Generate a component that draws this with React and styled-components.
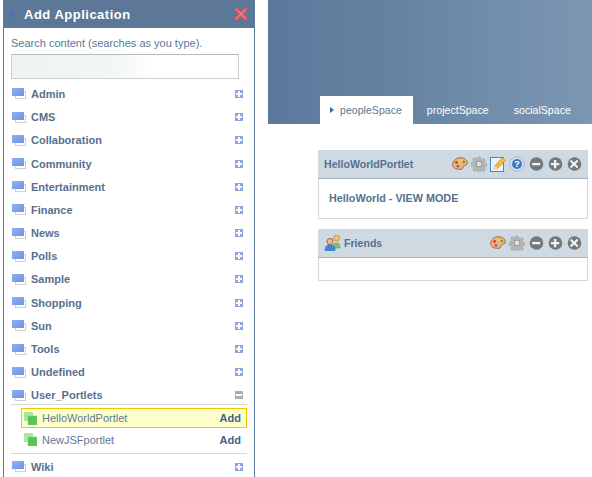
import React from 'react'
import styled, { createGlobalStyle } from 'styled-components'

const Global = createGlobalStyle`
  html, body { margin: 0; padding: 0; background: #fff; overflow: hidden; }
  body { font-family: "Liberation Sans", Arial, sans-serif; }
`
const Page = styled.div`
  width: 592px;
  height: 477px;
  display: flex;
  overflow: hidden;
`
const Drawer = styled.aside`
  width: 250px;
  height: 477px;
  margin-left: 3px;
  border: solid #5d7b9d;
  border-width: 0 1px 0 1px;
  flex: none;
`
const DrawerHead = styled.header`
  height: 28px;
  background: #5c7797;
  display: flex;
  align-items: center;
  padding: 0 6px 0 7px;
  color: #fff;
  font-size: 13px;
  font-weight: bold;
  letter-spacing: 0.5px;
`
const HeadArrow = styled.span`
  width: 0;
  height: 0;
  border-left: 5px solid #3f78b8;
  border-top: 4px solid transparent;
  border-bottom: 4px solid transparent;
  margin-right: 8px;
`
const HeadTitle = styled.span`
  flex: 1;
`
const SearchLabel = styled.div`
  margin: 9px 0 0 7px;
  font-size: 11px;
  line-height: 13px;
  color: #5c7797;
`
const SearchBox = styled.div`
  width: 226px;
  height: 23px;
  margin: 4px 0 0 7px;
  border: 1px solid #c9cfcf;
  border-top-color: #b5bcbc;
  background: linear-gradient(90deg, #eef3f3 0, #f3f6f6 45%, #fff 62%);
`
const List = styled.div`
  margin-top: 3.4px;
`
const Row = styled.div`
  height: 23.2px;
  display: flex;
  align-items: center;
  padding: 0 11px 0 8px;
  color: #56718f;
  font-size: 11px;
  font-weight: bold;
`
const RowName = styled.span`
  flex: 1;
  margin-left: 5px;
`
const SubList = styled.div`
  margin: -2.9px 7px 1px 7px;
  padding: 3px 0 2px;
  border-top: 1px solid #d8d8d8;
  border-bottom: 1px solid #d8d8d8;
`
const SubRow = styled.div`
  height: ${p => (p.$active ? '20px' : '23px')};
  display: flex;
  align-items: center;
  box-sizing: border-box;
  margin-left: 10px;
  padding: 0 5px 0 2px;
  font-size: 11px;
  color: #5f7a99;
  background: ${p => (p.$active ? '#ffffcc' : 'transparent')};
  border: ${p => (p.$active ? '1px solid #f2c600' : '1px solid transparent')};
`
const SubName = styled.span`
  flex: 1;
  margin-left: 5px;
`
const AddLink = styled.span`
  color: #3e6290;
  font-weight: bold;
`
const Main = styled.main`
  margin-left: 13px;
  flex: 1;
  min-width: 0;
`
const Hero = styled.div`
  height: 124px;
  background: linear-gradient(90deg, #5b799c 0%, #64829f 35%, #6f8cab 65%, #7c97b2 100%);
  display: flex;
  align-items: flex-end;
  padding-left: 52px;
`
const Tab = styled.div`
  height: 28px;
  display: flex;
  align-items: center;
  padding: 0 ${p => (p.$active ? '11px' : '13px')} 0 ${p => (p.$active ? '10px' : '12px')};
  background: ${p => (p.$active ? '#fff' : 'transparent')};
  color: ${p => (p.$active ? '#5c7797' : '#fff')};
  font-size: 10.6px;
  margin-right: ${p => (p.$active ? '2px' : '0')};
`
const TabArrow = styled.span`
  width: 0;
  height: 0;
  border-left: 4px solid #2f6ea5;
  border-top: 3.5px solid transparent;
  border-bottom: 3.5px solid transparent;
  margin-right: 6px;
`
const Portlets = styled.div`
  padding: 26px 4px 0 50px;
  display: flex;
  flex-direction: column;
  gap: 10px;
`
const Portlet = styled.section`
  width: 270px;
`
const PortletBar = styled.div`
  height: 27px;
  padding: 0 6px 1px;
  background: #cfd9e2;
  border-bottom: 1px solid #a9b6c2;
  display: flex;
  align-items: center;
  color: #56718f;
  font-size: 10.6px;
  font-weight: bold;
`
const PortletTitle = styled.span`
  flex: 1;
  margin-left: ${p => (p.$icon ? '1px' : '0')};
`
const PortletTools = styled.div`
  display: flex;
  align-items: center;
  gap: 3px;
`
const PortletBody = styled.div`
  height: ${p => p.$h}px;
  box-sizing: border-box;
  border: 1px solid #cfd9e2;
  border-top: 0;
  padding: 13px 10px 0;
  color: #56718f;
  font-size: 10.8px;
  font-weight: bold;
`

const Folder = () => (
  <svg width="14" height="11" viewBox="0 0 14 11">
    <defs>
      <linearGradient id="fold" x1="0" y1="0" x2="1" y2="1">
        <stop offset="0" stopColor="#8fb0f2" />
        <stop offset="1" stopColor="#6f93e0" />
      </linearGradient>
    </defs>
    <rect x="3.500" y="3.500" width="10" height="7" fill="#fff" stroke="#cfcfcf" />
    <rect x="0" y="0" width="12" height="8" fill="url(#fold)" />
  </svg>
)
const Toggle = ({ open }) => (
  <svg width="8" height="8" viewBox="0 0 8 8">
    <rect width="8" height="8" fill={open ? '#a9adb5' : '#8ea6dc'} />
    <path d={open ? 'M1 3h6v2H1z' : 'M3 1h2v2h2v2H5v2H3V5H1V3h2z'} fill="#fff" />
  </svg>
)
const PortletIcon = () => (
  <svg width="13" height="13" viewBox="0 0 13 13">
    <rect width="9" height="9" fill="#a8ea9c" />
    <rect x="4" y="4" width="9" height="9" fill="#58c458" stroke="#7bd07a" strokeWidth="0.600" />
  </svg>
)
const Close = () => (
  <svg width="14" height="14" viewBox="0 0 14 14">
    <path d="M2.500 2.500l9 9M11.500 2.500l-9 9" stroke="#f0555e" strokeWidth="3.400" strokeLinecap="round" />
    <path d="M2.500 2.500l9 9M11.500 2.500l-9 9" stroke="#f58a8e" strokeWidth="1" strokeLinecap="round" />
  </svg>
)
const Palette = () => (
  <svg width="16" height="14" viewBox="0 0 16 14">
    <path d="M.7 7.500C.7 3.500 4.500.7 8.500.7c4 0 6.800 2.400 6.800 5.300 0 2.600-2.800 2-3.800 3-.9.9.6 3.300-3.500 3.300C3.800 12.300.7 11 .7 7.500z" fill="#efb47a" stroke="#a8683a" />
    <circle cx="4.500" cy="5.500" r="1.400" fill="#d9352b" />
    <circle cx="8" cy="3.600" r="1.300" fill="#e8cf3a" />
    <circle cx="11.800" cy="5" r="1.300" fill="#4aa84a" />
    <circle cx="6" cy="9.300" r="1.300" fill="#3a6fd0" />
  </svg>
)
const Gear = () => (
  <svg width="16" height="16" viewBox="0 0 16 16">
    <path d="M6.800 1h2.400l.4 2 1.500.6 1.700-1.100 1.700 1.700-1.100 1.700.6 1.500 2 .4v2.400l-2 .4-.6 1.500 1.100 1.700-1.700 1.700-1.700-1.100-1.500.6-.4 2H6.800l-.4-2-1.500-.6-1.700 1.100-1.700-1.700 1.100-1.700-.6-1.500-2-.4V6.800l2-.4.6-1.500-1.100-1.700 1.700-1.700 1.700 1.100 1.500-.6z" fill="#b3b5b6" stroke="#9c9ea0" strokeWidth="0.500" />
    <circle cx="8" cy="8" r="3" fill="#dedede" stroke="#8f9192" />
  </svg>
)
const Edit = () => (
  <svg width="16" height="16" viewBox="0 0 16 16">
    <rect x="0.500" y="1.500" width="13" height="14" fill="#eaf3fc" stroke="#3f86d0" />
    <path d="M4 13l.8-3.200L12.500 1.500l3 2.700L7.500 12.500z" fill="#f4bb3c" stroke="#c98a1a" strokeWidth="0.700" />
    <path d="M4 13l.8-3.200 2.700 2.700z" fill="#fbe6bf" />
  </svg>
)
const Help = () => (
  <svg width="16" height="16" viewBox="0 0 16 16">
    <circle cx="8" cy="8" r="7.200" fill="#d3e0f2" stroke="#9fbae0" />
    <circle cx="8" cy="8" r="5" fill="#4678c6" />
    <text x="8" y="11.200" textAnchor="middle" fontSize="9" fontWeight="bold" fill="#fff" fontFamily="Liberation Sans">?</text>
  </svg>
)
const Round = ({ kind }) => (
  <svg width="16" height="16" viewBox="0 0 16 16">
    <circle cx="8.500" cy="8" r="6.800" fill="#74787a" />
    <path transform="translate(.9 .8) scale(.9)" d={kind === 'min' ? 'M3.500 6.800h9v2.600h-9z' : kind === 'max' ? 'M6.700 3.500h2.600v3.300h3.300v2.600H9.300v3.300H6.700V9.400H3.400V6.800h3.300z' : 'M4.800 3.400L8 6.300l3.200-2.900 1.500 1.600L9.800 8l2.900 3-1.500 1.600L8 9.700l-3.200 2.900L3.300 11l2.900-3-2.900-3z'} fill="#f2f2f2" />
  </svg>
)
const People = () => (
  <svg width="19" height="17" viewBox="0 0 19 17">
    <circle cx="12.500" cy="4" r="3" fill="#f1c27d" stroke="#d08a3c" strokeWidth="0.800" />
    <path d="M9 14c0-3.500 1-5 3.500-5S16 10.500 16 14z" fill="#7cc36a" stroke="#5b9a4d" strokeWidth="0.600" />
    <circle cx="6" cy="7.500" r="3" fill="#eebd8f" stroke="#8a4a2a" strokeWidth="0.800" />
    <path d="M1 16.500c0-4 1.500-5.500 5-5.500s5 1.500 5 5.500z" fill="#3f86e0" stroke="#2c64b0" strokeWidth="0.600" />
  </svg>
)

const categories = ['Admin', 'CMS', 'Collaboration', 'Community', 'Entertainment', 'Finance', 'News', 'Polls', 'Sample', 'Shopping', 'Sun', 'Tools', 'Undefined']

export default function App() {
  return (
    <Page>
      <Global />
      <Drawer>
        <DrawerHead>
          <HeadArrow />
          <HeadTitle>Add Application</HeadTitle>
          <Close />
        </DrawerHead>
        <SearchLabel>Search content (searches as you type).</SearchLabel>
        <SearchBox />
        <List>
          {categories.map(name => (
            <Row key={name}>
              <Folder />
              <RowName>{name}</RowName>
              <Toggle />
            </Row>
          ))}
          <Row>
            <Folder />
            <RowName>User_Portlets</RowName>
            <Toggle open />
          </Row>
          <SubList>
            <SubRow $active>
              <PortletIcon />
              <SubName>HelloWorldPortlet</SubName>
              <AddLink>Add</AddLink>
            </SubRow>
            <SubRow>
              <PortletIcon />
              <SubName>NewJSFportlet</SubName>
              <AddLink>Add</AddLink>
            </SubRow>
          </SubList>
          <Row>
            <Folder />
            <RowName>Wiki</RowName>
            <Toggle />
          </Row>
        </List>
      </Drawer>
      <Main>
        <Hero>
          <Tab $active><TabArrow />peopleSpace</Tab>
          <Tab>projectSpace</Tab>
          <Tab>socialSpace</Tab>
        </Hero>
        <Portlets>
          <Portlet>
            <PortletBar>
              <PortletTitle>HelloWorldPortlet</PortletTitle>
              <PortletTools>
                <Palette /><Gear /><Edit /><Help />
                <Round kind="min" /><Round kind="max" /><Round kind="close" />
              </PortletTools>
            </PortletBar>
            <PortletBody $h={40}>HelloWorld - VIEW MODE</PortletBody>
          </Portlet>
          <Portlet>
            <PortletBar>
              <People />
              <PortletTitle $icon>Friends</PortletTitle>
              <PortletTools>
                <Palette /><Gear />
                <Round kind="min" /><Round kind="max" /><Round kind="close" />
              </PortletTools>
            </PortletBar>
            <PortletBody $h={23} />
          </Portlet>
        </Portlets>
      </Main>
    </Page>
  )
}
